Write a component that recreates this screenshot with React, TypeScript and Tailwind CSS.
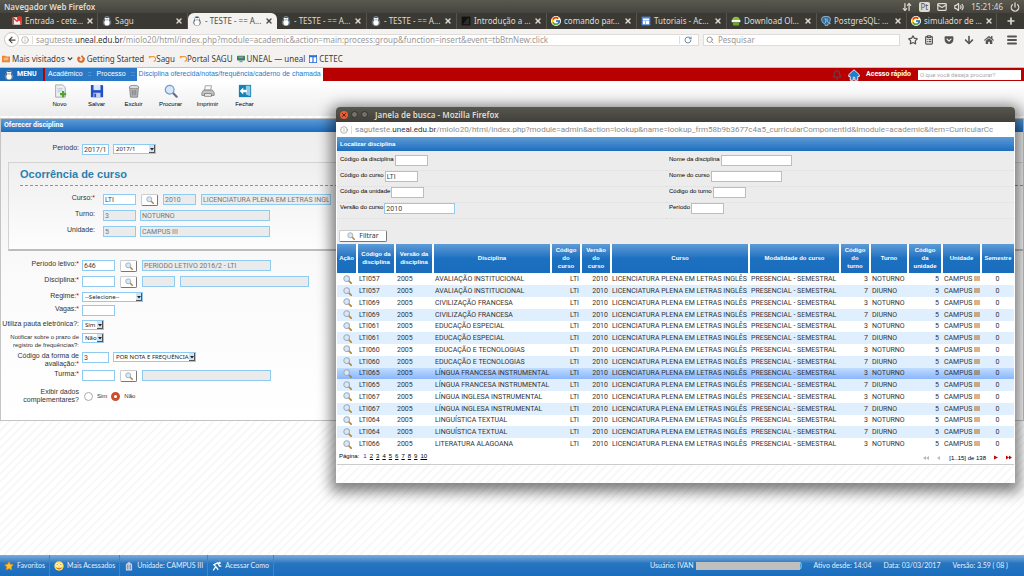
import React from 'react';
import { ArrowDownUp, Bell, ClipboardList, Info, Mail, Menu, Plus, Power, RotateCw, Search, Star, Volume2, X } from 'lucide-react';
import { FcGoogle } from 'react-icons/fc';
import { FaArrowDown, FaArrowLeft, FaFirefoxBrowser, FaGetPocket, FaHome } from 'react-icons/fa';

const Penguin = ({ className = 'h-2.5 w-2.5' }: { className?: string }) => (
  <svg viewBox="0 0 16 16" className={`shrink-0 ${className}`} aria-hidden="true">
    <path d="M8 0.5c-2.6 0-3.9 1.8-3.9 4 0 1.500-2.100 3-2.100 6 0 3.200 2.500 5 6 5s6-1.800 6-5c0-3-2.100-4.500-2.100-6 0-2.200-1.300-4-3.900-4z" fill="#29486b" stroke="#b9cbdc" strokeWidth="0.800" />
    <ellipse cx="8" cy="10.500" rx="4.400" ry="4.700" fill="#fff" />
    <circle cx="6.300" cy="4.500" r="1.800" fill="#fff" />
    <circle cx="9.700" cy="4.500" r="1.800" fill="#fff" />
    <path d="M6.500 6h3L8 8z" fill="#f2a41f" />
  </svg>
);

const Magnifier = ({ className = 'h-2.5 w-2.5' }: { className?: string }) => (
  <svg viewBox="0 0 16 16" className={`shrink-0 ${className}`} aria-hidden="true">
    <path d="M10 10l4.500 4.500" stroke="#b9842f" strokeWidth="3" strokeLinecap="round" />
    <circle cx="6.500" cy="6.500" r="5" fill="#d9e8f8" stroke="#a2abb8" strokeWidth="1.800" />
  </svg>
);

const MailIcon = () => (
  <svg viewBox="0 0 16 16" className="h-2.5 w-2.5 shrink-0" aria-hidden="true">
    <rect x="1" y="2" width="14" height="12" rx="1" fill="#f5eeee" />
    <path d="M2 14V3l6 5.500L14 3v11" fill="none" stroke="#d33b30" strokeWidth="2" />
    <circle cx="12" cy="4" r="4" fill="#d8372d" />
  </svg>
);

const DarkIcon = () => (
  <svg viewBox="0 0 16 16" className="h-2.5 w-2.5 shrink-0" aria-hidden="true">
    <rect x="1" y="1" width="14" height="14" fill="#111" />
    <path d="M3 13L11 3l2 1v9z" fill="#2d2d2d" />
  </svg>
);

const GridIcon = () => (
  <svg viewBox="0 0 16 16" className="h-2.5 w-2.5 shrink-0" aria-hidden="true">
    <rect x="1" y="1" width="14" height="14" fill="#4a86e0" />
    <path d="M3 4h10v3H3zM3 8h4v5H3zM8 8h5v5H8z" fill="#fff" />
  </svg>
);

const DownloadSiteIcon = () => (
  <svg viewBox="0 0 16 16" className="h-2.5 w-2.5 shrink-0" aria-hidden="true">
    <path d="M2 6c0-3 3-5 6-5s6 2 6 5z" fill="#8bc03f" />
    <rect x="1" y="6" width="14" height="4" rx="1" fill="#f3f3e8" />
    <rect x="3" y="10" width="10" height="5" rx="1" fill="#6ea52b" />
  </svg>
);

const ElephantIcon = () => (
  <svg viewBox="0 0 16 16" className="h-2.5 w-2.5 shrink-0" aria-hidden="true">
    <path d="M2 2c3-2 9-2 12 0 2 2 1 6-1 9l2 1-4 1-1 3H7l-1-4-3-1C1 8 0 4 2 2z" fill="#336e9f" stroke="#c8dcec" />
    <path d="M6 3c2 2 2 5 1 8M10 4c-1 3 0 5 2 7" stroke="#d9e7f3" fill="none" />
  </svg>
);

const tabs = [
  { title: 'Entrada - cete...', icon: <MailIcon /> },
  { title: 'Sagu', icon: <Penguin /> },
  { title: '- TESTE - == A...', icon: <Penguin />, active: true },
  { title: '- TESTE - == A...', icon: <Penguin /> },
  { title: '- TESTE - == A...', icon: <Penguin /> },
  { title: 'Introdução a ...', icon: <DarkIcon /> },
  { title: 'comando par...', icon: <FcGoogle className="h-2.5 w-2.5 shrink-0 rounded-full bg-white" /> },
  { title: 'Tutoriais - Ac...', icon: <GridIcon /> },
  { title: 'Download Ol...', icon: <DownloadSiteIcon /> },
  { title: 'PostgreSQL: ...', icon: <ElephantIcon /> },
  { title: 'simulador de ...', icon: <FcGoogle className="h-2.5 w-2.5 shrink-0 rounded-full bg-white" /> },
];

const SystemBar = () => (
  <div className="flex h-[13px] items-center justify-between bg-linear-to-b from-[#5a594f] to-[#45443e] px-1 text-[8px] text-[#dfdbd2]">
    <span className="font-semibold">Navegador Web Firefox</span>
    <div className="flex items-center gap-[7px]">
      <ArrowDownUp className="h-2.5 w-2.5" strokeWidth={3} />
      <span className="rounded-xs bg-[#dfdbd2] px-0.5 leading-[10px] text-[#55534b]">Pt</span>
      <Mail className="h-2.5 w-2.5" strokeWidth={3} />
      <Volume2 className="h-2.5 w-2.5" strokeWidth={3} />
      <span>15:21:46</span>
      <Power className="h-2.5 w-2.5" strokeWidth={3} />
    </div>
  </div>
);

const TabStrip = () => (
  <div className="flex h-4 bg-[#3a3934] pl-2 text-[8px] text-[#dfdbd2]">
    {tabs.map((tab, i) => (
      <div
        key={i}
        className={
          tab.active
            ? 'flex min-w-0 flex-1 items-center gap-[3px] rounded-t-md bg-[#f4f2f1] px-1 text-[#4b4a46]'
            : 'flex min-w-0 flex-1 items-center gap-[3px] border-r border-[#55544d] px-1'
        }
      >
        {tab.icon}
        <span className="flex-1 whitespace-nowrap">{tab.title}</span>
        <button aria-label="Fechar aba"><X className="h-2 w-2" strokeWidth={4} /></button>
      </div>
    ))}
    <button aria-label="Nova aba" className="flex w-[27px] items-center justify-center">
      <Plus className="h-2.5 w-2.5" strokeWidth={4} />
    </button>
  </div>
);

const NavBar = () => (
  <div className="flex h-[21px] items-center gap-1 bg-[#f3f2f1] pr-1.5 pl-1 text-[8px] text-[#9a9895]">
    <div className="flex min-w-0 flex-1 items-center">
      <button aria-label="Voltar" className="flex h-[15px] w-[15px] shrink-0 items-center justify-center rounded-full border border-[#c9c6c3] bg-white">
        <FaArrowLeft className="h-2 w-2 text-[#444]" />
      </button>
      <div className="flex h-3 min-w-0 flex-1 items-center gap-[3px] border border-l-0 border-[#dedbd8] bg-white px-0.5">
        <Info className="h-2 w-2 shrink-0" />
        <span className="h-2 border-l border-[#ddd]" />
        <span className="flex-1 overflow-hidden leading-[10px] whitespace-nowrap">
          saguteste.<span className="text-[#333]">uneal.edu.br</span>
          /miolo20/html/index.php?module=academic&amp;action=main:process:group&amp;function=insert&amp;event=tbBtnNew:click
        </span>
        <button aria-label="Recarregar" className="border-l border-[#ddd] px-1">
          <RotateCw className="h-2 w-2 text-[#6f8ba0]" strokeWidth={3} />
        </button>
      </div>
    </div>
    <div className="flex h-3 w-[197px] items-center gap-1 border border-[#dedbd8] bg-white px-0.5">
      <Search className="h-2 w-2" strokeWidth={3} />
      <input aria-label="Pesquisar" placeholder="Pesquisar" className="min-w-0 flex-1 outline-none placeholder:text-[#9a9895]" />
    </div>
    <div className="ml-1 flex items-center gap-2.5 text-[#55534f]">
      <Star className="h-2.5 w-2.5" strokeWidth={3} />
      <ClipboardList className="-ml-1 h-2.5 w-2.5" strokeWidth={3} />
      <FaGetPocket className="h-2.5 w-2.5" />
      <FaArrowDown className="h-2.5 w-2.5" />
      <FaHome className="h-2.5 w-2.5" />
      <Menu className="ml-0.5 h-3 w-3" strokeWidth={4} />
    </div>
  </div>
);

const Curl = () => (
  <svg viewBox="0 0 10 10" className="h-2 w-2" aria-hidden="true">
    <path d="M1 2h5a3 3 0 0 1 1 6M1 2l2 2" fill="none" stroke="#ee9a3b" strokeWidth="1.400" />
  </svg>
);

const Bookmarks = () => (
  <nav className="flex h-[18px] items-center gap-1 border-b border-[#c4c1be] bg-[#f3f2f1] px-0.5 text-[8px] text-[#3e3d3a]">
    <a href="#" className="flex items-center gap-0.5">
      <svg viewBox="0 0 10 10" className="h-2 w-2" aria-hidden="true">
        <path d="M0 1h4l1 1h5v7H0z" fill="#ea8533" />
        <path d="M2 4h6M2 6h6" stroke="#fbe0c4" />
      </svg>
      Mais visitados
      <svg viewBox="0 0 8 8" className="h-1.5 w-1.5" aria-hidden="true"><path d="M1 2l3 3 3-3" fill="none" stroke="#444" strokeWidth="1.500" /></svg>
    </a>
    <a href="#" className="flex items-center gap-0.5"><FaFirefoxBrowser className="h-2 w-2 text-[#dc6524]" />Getting Started</a>
    <a href="#" className="flex items-center"><Curl />Sagu</a>
    <a href="#" className="flex items-center"><Curl />Portal SAGU</a>
    <a href="#" className="flex items-center gap-0.5">
      <svg viewBox="0 0 10 10" className="h-2 w-2" aria-hidden="true">
        <rect y="1" width="10" height="6" rx="1" fill="#3c7d5b" />
        <path d="M2 3h6M3 8h4" stroke="#7fa0b8" strokeWidth="2" />
      </svg>
      UNEAL — uneal
    </a>
    <a href="#" className="flex items-center gap-0.5">
      <svg viewBox="0 0 10 10" className="h-2 w-2" aria-hidden="true">
        <rect x="0.500" y="0.500" width="9" height="9" fill="#fff" stroke="#2d6fd8" />
        <path d="M0 2h10M5 2v8" stroke="#2d6fd8" strokeWidth="1.500" />
      </svg>
      CETEC
    </a>
  </nav>
);

const AppHeader = () => (
  <header className="flex h-[13px] items-center bg-[#b90000] text-[7px] text-white">
    <button className="mr-0.5 flex h-full w-[43px] items-center gap-[3px] bg-[#1c69b6] px-1 font-bold">
      <Penguin />
      MENU
    </button>
    <nav className="flex h-full items-center bg-[#2a79c6] font-['Liberation_Sans',Arial,sans-serif]">
      <a href="#" className="px-[3px]">Acadêmico</a>
      <span className="px-0.5 text-[#9cc5ea]">::</span>
      <a href="#" className="px-[3px]">Processo</a>
      <span className="px-0.5 text-[#9cc5ea]">::</span>
      <a href="#" className="flex h-full items-center bg-white px-0.5 text-[#2a79c6]">
        Disciplina oferecida/notas/frequência/caderno de chamada
      </a>
    </nav>
    <div className="ml-auto flex items-center pr-[3px]">
      <Bell className="mr-1.5 h-2.5 w-2.5 text-[#6c3a48]" strokeWidth={3} />
      <svg viewBox="0 0 16 16" className="mr-1.5 h-3 w-3" aria-hidden="true">
        <path d="M8 1L1 7.500V10h2v5h4v-4h2v4h4v-5h2V7.500z" fill="#1c7fd0" stroke="#e4f1fb" strokeWidth="1.300" />
      </svg>
      <label htmlFor="quick" className="mr-[7px] font-bold">Acesso rápido</label>
      <input id="quick" placeholder="O que você deseja procurar?" className="h-2.5 w-[103px] bg-white px-0.5 text-[6px] text-black placeholder:text-[#aaa]" />
    </div>
  </header>
);

const tools = [
  {
    label: 'Novo',
    icon: (
      <>
        <path d="M3 1h8l3 3v11H3z" fill="#eef1f4" stroke="#9aa2ab" />
        <path d="M5 5h6M5 7h6M5 9h4" stroke="#b9c1c9" />
        <path d="M11.500 8v7M8 11.500h7" stroke="#4ea52a" strokeWidth="2.600" />
      </>
    ),
  },
  {
    label: 'Salvar',
    icon: (
      <>
        <path d="M1 1h13l1 1v13H1z" fill="#2350c4" />
        <rect x="4" y="1" width="8" height="6" fill="#dbe8fb" />
        <rect x="4" y="10" width="8" height="5" fill="#c3d2ee" />
        <rect x="5" y="11" width="2" height="4" fill="#2350c4" />
      </>
    ),
  },
  {
    label: 'Excluir',
    icon: (
      <>
        <path d="M3 4h10l-1 11H4z" fill="#b9bbbb" stroke="#7f8282" />
        <ellipse cx="8" cy="3.500" rx="5.500" ry="2" fill="#dcdddd" stroke="#858888" />
        <path d="M6 7v6M8 7v6M10 7v6" stroke="#777" />
      </>
    ),
  },
  {
    label: 'Procurar',
    icon: (
      <>
        <path d="M10 10l4.500 4.500" stroke="#5b6f8c" strokeWidth="2.400" strokeLinecap="round" />
        <circle cx="6.500" cy="6.500" r="5" fill="#d6e8fb" stroke="#7c98bf" strokeWidth="1.400" />
      </>
    ),
  },
  {
    label: 'Imprimir',
    icon: (
      <>
        <path d="M5 2h7l-1 5H4z" fill="#fafafa" stroke="#999" />
        <path d="M3 7h10l2 3v3H1v-3z" fill="#c2c4c5" stroke="#7d7f80" />
        <path d="M4 11h8v3H4z" fill="#f5f5f5" stroke="#777" />
      </>
    ),
  },
  {
    label: 'Fechar',
    icon: (
      <>
        <rect x="1" y="1" width="14" height="14" fill="#1680b8" />
        <path d="M9 2h5v12l-5-2z" fill="#8fcbe6" />
        <path d="M2 8l4-4v2.500h4v3H6V12z" fill="#fff" />
      </>
    ),
  },
];

const Toolbar = () => (
  <div className="flex h-[35px] items-start bg-linear-to-b from-white to-[#ececec] pt-[3px] pl-[41px] font-['Liberation_Sans',Arial,sans-serif] text-[6px] text-black">
    {tools.map((tool) => (
      <button key={tool.label} className="flex w-[37px] flex-col items-center gap-0.5">
        <svg viewBox="0 0 16 16" className="h-3.5 w-3.5" aria-hidden="true">{tool.icon}</svg>
        <span className="leading-[9px]">{tool.label}</span>
      </button>
    ))}
  </div>
);

interface FieldProps {
  id: string;
  value?: string;
  label?: string;
  width: string;
  readOnly?: boolean;
}

const Field = ({ id, value = '', label, width, readOnly }: FieldProps) => (
  <input
    id={id}
    aria-label={label}
    defaultValue={value}
    readOnly={readOnly}
    className={`h-[11px] min-w-0 border border-[#8fcbf0] px-px font-[Roboto,Arial,sans-serif] text-[7px] leading-[9px] ${width} ${readOnly ? 'bg-[#ebebeb] text-[#777]' : 'bg-white text-[#444]'}`}
  />
);

const Select = ({ id, value, label, width }: FieldProps) => (
  <span className={`relative inline-block h-2.5 ${width}`}>
    <select id={id} aria-label={label} className="block h-full w-full appearance-none border border-[#8fcbf0] bg-white pl-0.5 font-['Noto_Sans',sans-serif] text-[6px] leading-[8px] text-[#222]">
      <option>{value}</option>
    </select>
    <svg viewBox="0 0 6 8" className="pointer-events-none absolute top-px right-px h-2 w-1.5" aria-hidden="true">
      <rect width="6" height="8" fill="#cfe3f3" />
      <path d="M1 3h4L3 5.500z" fill="#222" />
      <path d="M0 7.500h6M5.500 0v8" stroke="#555" />
    </svg>
  </span>
);

const LookupButton = () => (
  <button type="button" aria-label="Buscar" className="mx-[5px] flex h-3 w-[17px] shrink-0 items-center justify-center rounded-xs border border-[#ccc] border-r-[#777] border-b-[#777] bg-white">
    <Magnifier className="h-2 w-2" />
  </button>
);

interface RowProps {
  id: string;
  label: string;
  required?: boolean;
  size?: string;
  labelWidth?: string;
  children: React.ReactNode;
}

const Row = ({ id, label, required, size = 'h-4', labelWidth = 'w-[78px]', children }: RowProps) => (
  <div className={`flex items-start ${size}`}>
    <label htmlFor={id} className={`shrink-0 text-right leading-[8px] whitespace-pre-line ${labelWidth}`}>
      {label}
      {required && <span className="text-[#c00]">*</span>}
    </label>
    {children}
  </div>
);

const CourseForm = () => (
  <section className="mt-0.5 border border-[#c4c4c4] bg-linear-to-b from-[#ededed] via-[#fafafa] to-white">
    <h1 className="h-[13px] bg-linear-to-b from-[#5c9bd6] to-[#1a6dbd] px-[3px] text-[7px] leading-[13px] font-bold text-white">Oferecer disciplina</h1>
    <form className="h-[288px] pt-3 font-['Liberation_Sans',Arial,sans-serif] text-[7px] text-[#333]">
      <Row id="periodo" label="Período:" size="h-[18px]">
        <div className="flex gap-1 pl-[3px]">
          <Field id="periodo" value="2017/1" width="w-[27px]" />
          <Select id="periodoSel" label="Período" value="2017/1" width="w-[43px]" />
        </div>
      </Row>
      <fieldset className="mb-[9px] ml-[7px] block h-[89px] border border-r-0 border-b-2 border-[#d2d2d2] border-b-[#bcbcbc] bg-linear-to-b from-[#efefef] to-[#fdfdfd] pl-[11px]">
        <h2 className="border-b border-dashed border-b-[#5aa5cf] pt-1 pb-[3px] text-[11px] leading-[15px] font-bold text-[#2a80b0]">Ocorrência de curso</h2>
        <div className="pt-2">
          <Row id="curso" label="Curso:" required labelWidth="mr-2 w-[75px]">
            <Field id="curso" value="LTI" width="w-[33px]" />
            <LookupButton />
            <div className="flex gap-[5px]">
              <Field id="cursoVer" label="Versão" value="2010" width="w-[33px]" readOnly />
              <Field id="cursoNome" label="Nome do curso" value="LICENCIATURA PLENA EM LETRAS INGLÊS" width="w-[130px]" readOnly />
            </div>
          </Row>
          <Row id="turno" label="Turno:" labelWidth="mr-2 w-[75px]">
            <div className="flex gap-1">
              <Field id="turno" value="3" width="w-[33px]" readOnly />
              <Field id="turnoNome" label="Nome do turno" value="NOTURNO" width="w-[130px]" readOnly />
            </div>
          </Row>
          <Row id="unidade" label="Unidade:" labelWidth="mr-2 w-[75px]">
            <div className="flex gap-1">
              <Field id="unidade" value="5" width="w-[33px]" readOnly />
              <Field id="unidadeNome" label="Nome da unidade" value="CAMPUS III" width="w-[130px]" readOnly />
            </div>
          </Row>
        </div>
      </fieldset>
      <Row id="letivo" label="Período letivo:" required labelWidth="mr-[3px] w-[78px]">
        <Field id="letivo" value="646" width="w-[33px]" />
        <LookupButton />
        <Field id="letivoNome" label="Nome do período" value="PERIODO LETIVO 2016/2 - LTI" width="w-[129px]" readOnly />
      </Row>
      <Row id="disciplina" label="Disciplina:" required labelWidth="mr-[3px] w-[78px]">
        <Field id="disciplina" width="w-[33px]" />
        <LookupButton />
        <div className="flex gap-[5px]">
          <Field id="discVer" label="Versão da disciplina" width="w-[33px]" readOnly />
          <Field id="discNome" label="Nome da disciplina" width="w-[129px]" readOnly />
        </div>
      </Row>
      <Row id="regime" label="Regime:" required size="h-[13px]" labelWidth="mr-[3px] w-[78px]">
        <Select id="regime" value="--Selecione--" width="w-[61px]" />
      </Row>
      <Row id="vagas" label="Vagas:" required size="h-[15px]" labelWidth="mr-[3px] w-[78px]">
        <Field id="vagas" width="w-[33px]" />
      </Row>
      <Row id="pauta" label="Utiliza pauta eletrônica?:" size="h-[13px]" labelWidth="mr-[3px] w-[78px]">
        <Select id="pauta" value="Sim" width="w-[22px]" />
      </Row>
      <Row id="notificar" label={'Notificar sobre o prazo de\nregistro de frequências?:'} size="h-[19px]" labelWidth="mr-[3px] w-[78px] text-[6px]">
        <Select id="notificar" value="Não" width="w-[22px]" />
      </Row>
      <Row id="forma" label={'Código da forma de\navaliação:'} required size="h-[18px]" labelWidth="mr-[3px] w-[78px]">
        <div className="flex gap-1">
          <Field id="forma" value="3" width="w-[27px]" />
          <Select id="formaSel" label="Forma de avaliação" value="POR NOTA E FREQUÊNCIA" width="w-[83px]" />
        </div>
      </Row>
      <Row id="turma" label="Turma:" required size="h-[18px]" labelWidth="mr-[3px] w-[78px]">
        <Field id="turma" width="w-[33px]" />
        <LookupButton />
        <Field id="turmaNome" label="Nome da turma" width="w-[129px]" readOnly />
      </Row>
      <Row id="exibirNao" label={'Exibir dados\ncomplementares?'} labelWidth="mr-[5px] w-[78px]">
        <div className="flex items-center gap-1 pt-1 text-[6px]">
          <input id="exibirSim" type="radio" name="exibir" className="h-[9px] w-[9px] appearance-none rounded-full border border-[#aaa] bg-white" />
          <label htmlFor="exibirSim" className="leading-[9px]">Sim</label>
          <input id="exibirNao" type="radio" name="exibir" defaultChecked className="h-[9px] w-[9px] appearance-none rounded-full border-3 border-[#c9502c] bg-white" />
          <label htmlFor="exibirNao" className="leading-[9px]">Não</label>
        </div>
      </Row>
    </form>
  </section>
);

const filters = [
  { id: 'fDisc', label: 'Código da disciplina', width: 'w-[33px]' },
  { id: 'fNomeDisc', label: 'Nome da disciplina', width: 'w-[71px]' },
  { id: 'fCurso', label: 'Código do curso', width: 'w-[33px]', value: 'LTI' },
  { id: 'fNomeCurso', label: 'Nome do curso', width: 'w-[71px]' },
  { id: 'fUnidade', label: 'Código da unidade', width: 'w-[33px]' },
  { id: 'fTurno', label: 'Código do turno', width: 'w-[33px]' },
  { id: 'fVersao', label: 'Versão do curso', width: 'w-[71px]', value: '2010' },
  { id: 'fPeriodo', label: 'Período', width: 'w-[33px]' },
];

const columns = [
  { title: 'Ação', width: 'w-[20px]' },
  { title: 'Código da\ndisciplina', width: 'w-[38px]' },
  { title: 'Versão da\ndisciplina', width: 'w-[38px]' },
  { title: 'Disciplina', width: 'w-[118px]' },
  { title: 'Código\ndo\ncurso', width: 'w-[30px]' },
  { title: 'Versão\ndo\ncurso', width: 'w-[30px]' },
  { title: 'Curso', width: 'w-[138px]' },
  { title: 'Modalidade do curso', width: 'w-[91px]' },
  { title: 'Código\ndo\nturno', width: 'w-[30px]' },
  { title: 'Turno', width: 'w-[38px]' },
  { title: 'Código\nda\nunidade', width: 'w-[34px]' },
  { title: 'Unidade', width: 'w-[39px]' },
  { title: 'Semestre', width: 'w-[33px]' },
];

const subjects = [
  ['LTI057', 'AVALIAÇÃO INSTITUCIONAL'],
  ['LTI057', 'AVALIAÇÃO INSTITUCIONAL'],
  ['LTI069', 'CIVILIZAÇÃO FRANCESA'],
  ['LTI069', 'CIVILIZAÇÃO FRANCESA'],
  ['LTI061', 'EDUCAÇÃO ESPECIAL'],
  ['LTI061', 'EDUCAÇÃO ESPECIAL'],
  ['LTI060', 'EDUCAÇÃO E TECNOLOGIAS'],
  ['LTI060', 'EDUCAÇÃO E TECNOLOGIAS'],
  ['LTI065', 'LÍNGUA FRANCESA INSTRUMENTAL'],
  ['LTI065', 'LÍNGUA FRANCESA INSTRUMENTAL'],
  ['LTI067', 'LÍNGUA INGLESA INSTRUMENTAL'],
  ['LTI067', 'LÍNGUA INGLESA INSTRUMENTAL'],
  ['LTI064', 'LINGUÍSTICA TEXTUAL'],
  ['LTI064', 'LINGUÍSTICA TEXTUAL'],
  ['LTI066', 'LITERATURA ALAGOANA'],
];

const SELECTED = 8;

const rowColor = (i: number) => {
  if (i === SELECTED) return 'bg-linear-to-b from-[#c0dcff] to-[#85b3fb]';
  return i % 2 ? 'bg-[#e0effe]' : 'bg-white';
};

const ResultsTable = () => (
  <table className="h-[206px] w-full table-fixed border-collapse text-[7px] whitespace-nowrap text-[#333]">
    <thead>
      <tr className="h-[29px]">
        {columns.map((col) => (
          <th key={col.title} className={`border-r-2 border-b border-white bg-linear-to-b from-[#5c9bd6] via-[#1c70c0] to-[#1a6dbd] px-0.5 font-['Liberation_Sans',Arial,sans-serif] text-[6px] leading-[8px] font-bold whitespace-pre-line text-white last:border-r-0 ${col.width}`}>
            {col.title}
          </th>
        ))}
      </tr>
    </thead>
    <tbody className="leading-[10px]">
      {subjects.map(([code, name], i) => (
        <tr key={i} className={rowColor(i)}>
          <td><button aria-label="Selecionar" className="ml-1.5 block"><Magnifier className="h-[9px] w-[9px]" /></button></td>
          <td className="pl-0.5">{code}</td>
          <td className="pl-0.5">2005</td>
          <td className="pl-0.5">{name}</td>
          <td className="pr-0.5 text-right">LTI</td>
          <td className="pr-[3px] text-right">2010</td>
          <td className="pl-px">LICENCIATURA PLENA EM LETRAS INGLÊS</td>
          <td className="pl-0.5">PRESENCIAL - SEMESTRAL</td>
          <td className="pr-0.5 text-right">{i % 2 ? 7 : 3}</td>
          <td className="pl-0.5">{i % 2 ? 'DIURNO' : 'NOTURNO'}</td>
          <td className="pr-[3px] text-right">5</td>
          <td className="pl-0.5">CAMPUS III</td>
          <td className="text-center">0</td>
        </tr>
      ))}
    </tbody>
  </table>
);

const Pagination = () => (
  <div className="flex h-[15px] items-start border-b border-[#ccc] px-0.5 pt-0.5 font-['Liberation_Sans',Arial,sans-serif] text-[6px] text-black">
    <span className="mr-1">Página:</span>
    <nav className="flex gap-[3px]">
      <span className="text-[#2424c4]">1</span>
      {[2, 3, 4, 5, 6, 7, 8, 9, 10].map((n) => (
        <a key={n} href="#" className="underline">{n}</a>
      ))}
    </nav>
    <div className="ml-auto flex items-center gap-[7px]">
      <button aria-label="Primeira"><svg viewBox="0 0 6 4" className="h-1 w-1.5"><path d="M3 0v4L0 2zM6 0v4L3 2z" fill="#bbb" /></svg></button>
      <button aria-label="Anterior"><svg viewBox="0 0 6 4" className="h-1 w-1.5"><path d="M4 0v4L1 2z" fill="#bbb" /></svg></button>
      <span className="pt-0.5">[1..15] de 138</span>
      <button aria-label="Próxima"><svg viewBox="0 0 6 4" className="h-[5px] w-1.5"><path d="M1 0v4l4-2z" fill="#c40000" /></svg></button>
      <button aria-label="Última"><svg viewBox="0 0 6 4" className="h-[5px] w-1.5"><path d="M0 0v4l3-2zM3 0v4l3-2z" fill="#c40000" /></svg></button>
    </div>
  </div>
);

const hatch = 'bg-[repeating-linear-gradient(135deg,#fff_0px,#fff_4px,#f8f8f8_4px,#f8f8f8_6px)]';

const SearchWindow = () => (
  <div role="dialog" aria-label="Janela de busca" className="absolute top-[107px] right-[9px] left-[336px] overflow-hidden rounded-t-sm bg-white px-px shadow-[0_4px_14px_5px_rgba(0,0,0,0.5)]">
    <div className="-mx-px flex h-[15px] items-center gap-[3px] bg-linear-to-b from-[#58574e] to-[#403f3a] px-1 font-['Noto_Sans',sans-serif] text-[8px] font-semibold text-[#dfdbd2]">
      <button aria-label="Fechar" className="flex h-2 w-2 items-center justify-center rounded-full bg-[#e95d35]"><X className="h-1.5 w-1.5 text-[#5b2414]" strokeWidth={4} /></button>
      <button aria-label="Minimizar" className="h-[7px] w-[7px] rounded-full border border-[#34332f] bg-[#74726a]" />
      <button aria-label="Maximizar" className="h-[7px] w-[7px] rounded-full border border-[#34332f] bg-[#74726a]" />
      <span className="ml-1">Janela de busca - Mozilla Firefox</span>
    </div>
    <div className="flex h-[15px] items-center gap-[3px] px-[3px] text-[8px] text-[#8e8c89]">
      <Info className="h-2 w-2 shrink-0" />
      <span className="h-2 border-l border-[#ddd]" />
      <span className="overflow-hidden leading-[12px] whitespace-nowrap">
        saguteste.<span className="text-[#333]">uneal.edu.br</span>
        /miolo20/html/index.php?module=admin&amp;action=lookup&amp;name=lookup_frm58b9b3677c4a5_curricularComponentId&amp;lmodule=academic&amp;item=CurricularCc
      </span>
    </div>
    <h2 className="h-3.5 bg-linear-to-b from-[#5c9bd6] to-[#1a6dbd] px-[3px] font-['Liberation_Sans',Arial,sans-serif] text-[6px] leading-[14px] font-bold text-white">Localizar disciplina</h2>
    <form className="bg-[#ececec] font-['Liberation_Sans',Arial,sans-serif]">
      <div className="grid grid-cols-[329fr_348fr] pt-1">
        {filters.map((f) => (
          <div key={f.id} className="flex h-4 items-start gap-px border-b border-dotted border-[#ddd] pl-[3px]">
            <label htmlFor={f.id} className="text-[6px] leading-[8px] text-black">{f.label}</label>
            <Field id={f.id} value={f.value} width={f.width} />
          </div>
        ))}
      </div>
      <div className="flex h-[25px] items-end pb-0.5 pl-0.5">
        <button type="button" className="flex h-3 w-12 items-center justify-center gap-1 rounded-xs border border-[#ccc] border-r-[#777] border-b-[#777] bg-white font-['Noto_Sans',sans-serif] text-[7px] text-[#333]">
          <Magnifier className="h-2 w-2" />
          Filtrar
        </button>
      </div>
    </form>
    <ResultsTable />
    <Pagination />
    <div className={`h-[18px] ${hatch}`} />
  </div>
);

const StatusBar = () => (
  <footer className="flex h-[21px] items-center bg-linear-to-b from-[#7baedd] via-[#2675c0] via-40% to-[#1a6dbd] font-[Lato,sans-serif] text-[7px] text-[#e7f1fb]">
    <nav className="flex h-full">
      <a href="#" className="flex h-full items-center gap-[3px] border-r border-[#3c85c8] px-1">
        <Star className="h-2.5 w-2.5 fill-[#ffc02e] text-[#dd8d12]" />
        Favoritos
      </a>
      <a href="#" className="flex h-full items-center gap-[3px] border-r border-[#3c85c8] px-1">
        <svg viewBox="0 0 16 16" className="h-2.5 w-2.5" aria-hidden="true">
          <circle cx="8" cy="8" r="7.500" fill="#ffe04a" />
          <ellipse cx="5" cy="6" rx="2.500" ry="3" fill="#fff" />
          <ellipse cx="11" cy="6" rx="2.500" ry="3" fill="#fff" />
          <path d="M4 6h2M10 6h2M4 11c2 2 6 2 8 0" fill="none" stroke="#b8501c" strokeWidth="1.500" />
        </svg>
        Mais Acessados
      </a>
      <a href="#" className="flex h-full items-center gap-[3px] border-r border-[#3c85c8] px-1">
        <svg viewBox="0 0 16 16" className="h-2.5 w-2.5" aria-hidden="true">
          <path d="M3 15V5l5-4 5 4v10z" fill="#c8cfdf" />
          <path d="M6 6v7M10 6v7" stroke="#6a7fae" strokeWidth="1.500" />
        </svg>
        Unidade: CAMPUS III
      </a>
      <a href="#" className="flex h-full items-center gap-[3px] border-r border-[#3c85c8] px-1">
        <svg viewBox="0 0 16 16" className="h-2.5 w-2.5" aria-hidden="true">
          <path d="M2 15l4-6-3-3 6-3 3 5h3M6 9l4 5" fill="none" stroke="#fff" strokeWidth="2" />
          <circle cx="12" cy="3" r="2" fill="#fff" />
        </svg>
        Acessar Como
      </a>
    </nav>
    <div className="ml-auto flex items-center gap-3 pr-4">
      <span className="flex items-center">
        Usuário: IVAN
        <span className="ml-0.5 h-2 w-[104px] bg-[#bfbfbf]" />
        )
      </span>
      <span>Ativo desde: 14:04</span>
      <span>Data: 03/03/2017</span>
      <span>Versão: 3.59 ( 08 )</span>
    </div>
  </footer>
);

const App: React.FC = () => (
  <div className={`relative flex min-h-screen flex-col font-[Roboto,Arial,sans-serif] ${hatch}`}>
    <div className="font-['Noto_Sans',sans-serif]">
      <SystemBar />
      <TabStrip />
      <NavBar />
      <Bookmarks />
    </div>
    <AppHeader />
    <Toolbar />
    <main className="flex-1">
      <CourseForm />
    </main>
    <StatusBar />
    <SearchWindow />
  </div>
);

export default App;
